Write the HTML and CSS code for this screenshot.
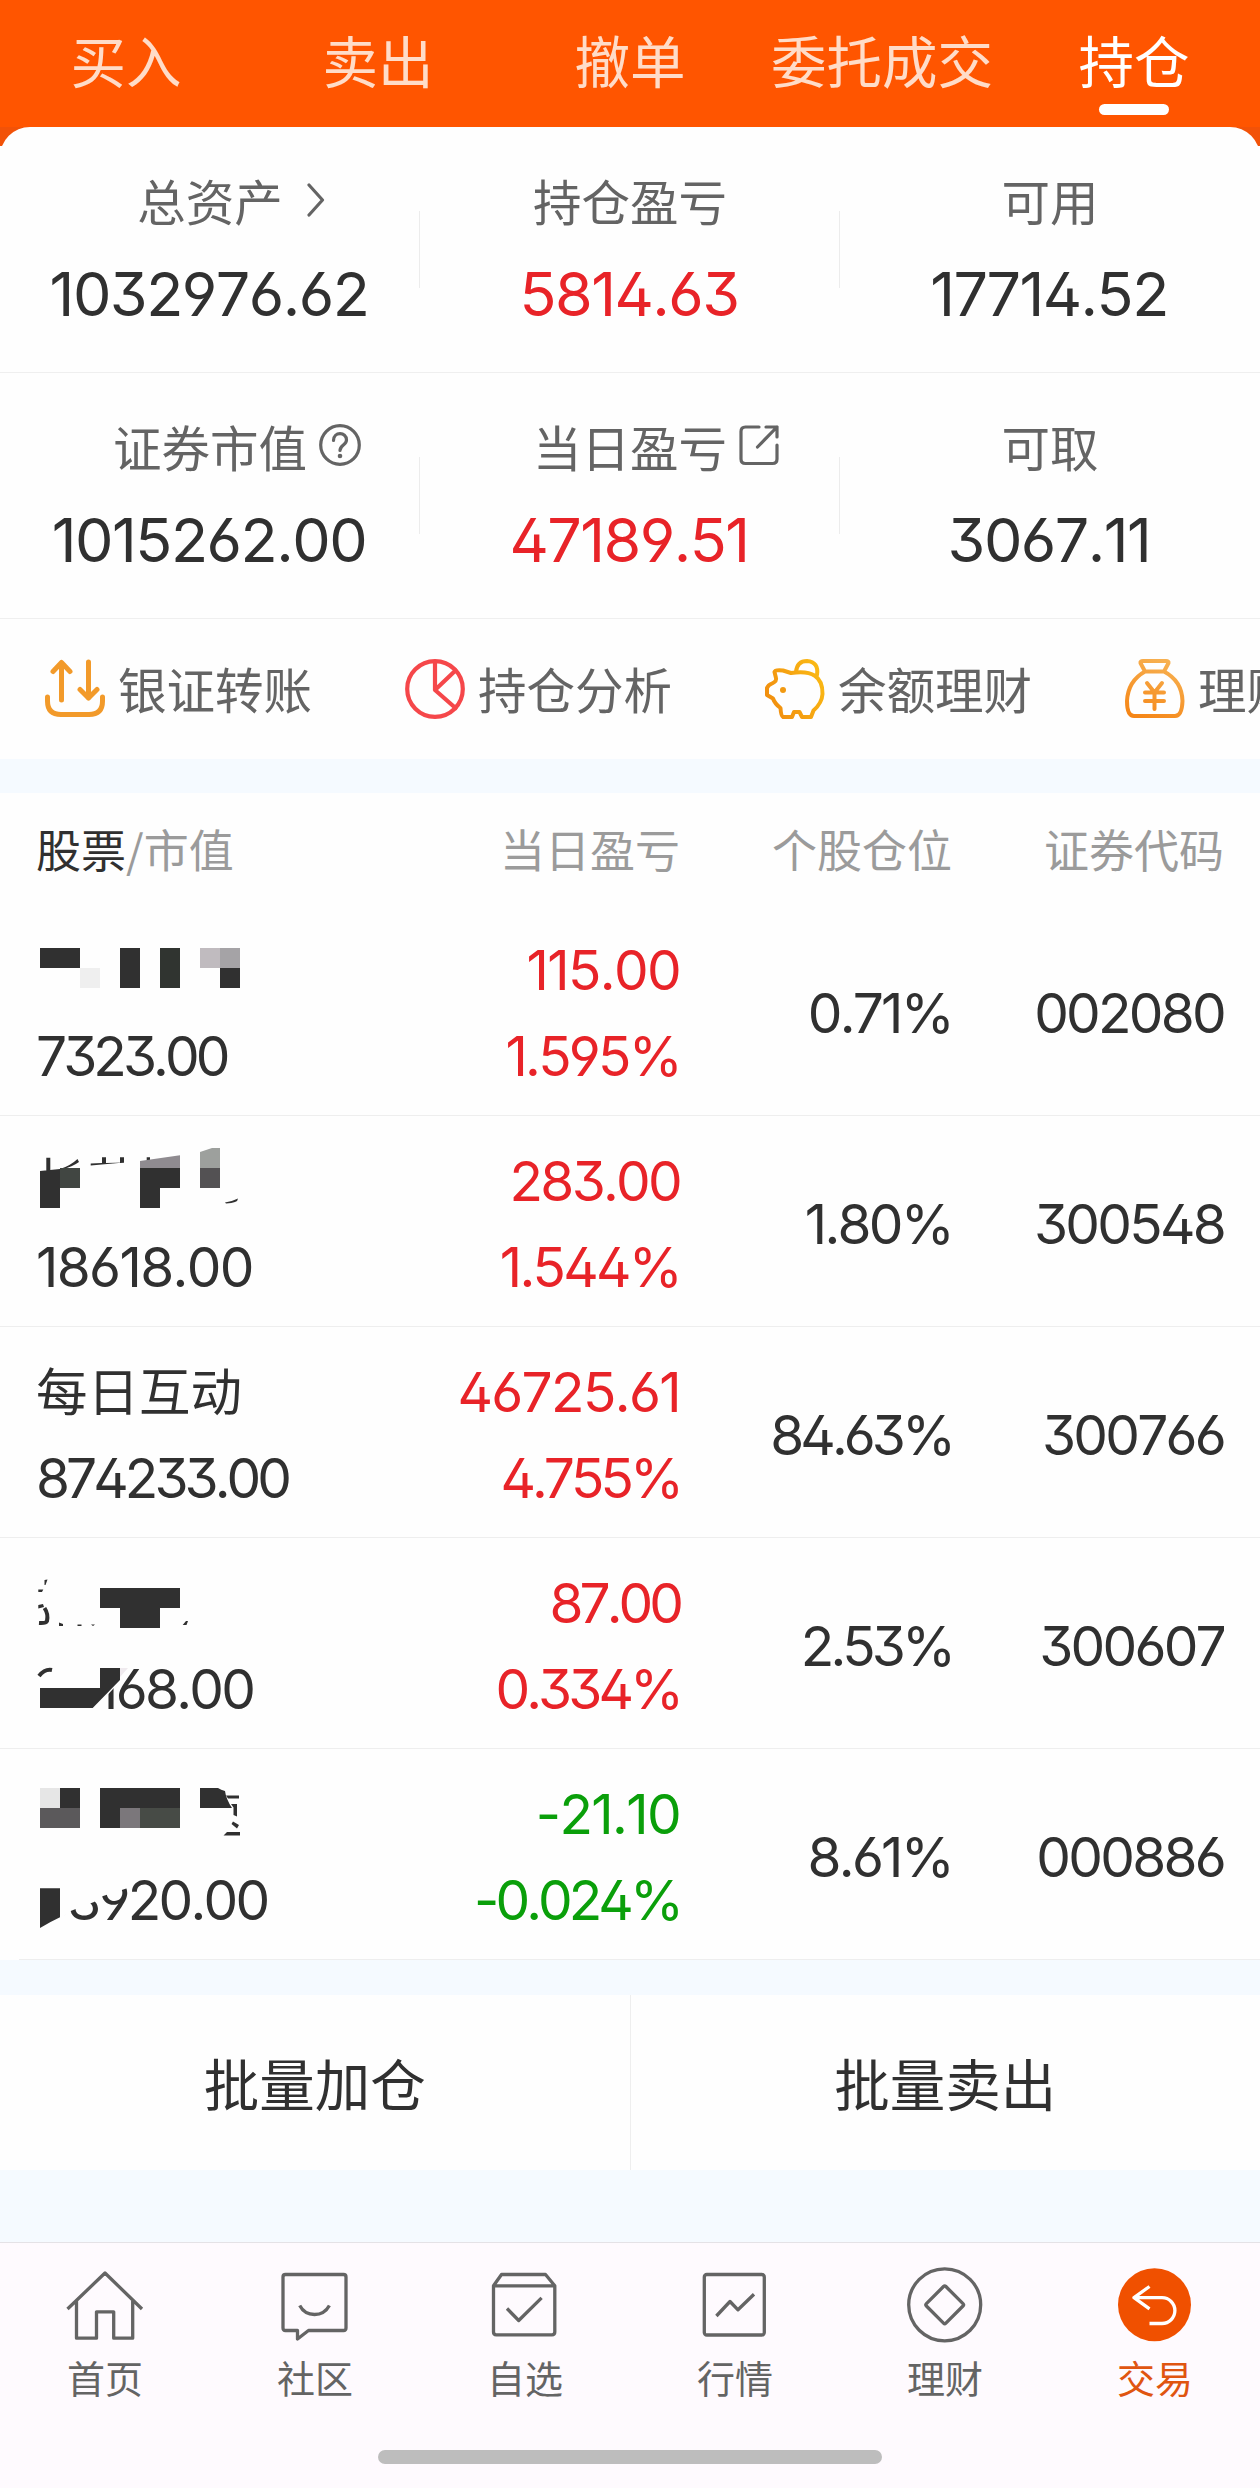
FILE: index.html
```html
<!DOCTYPE html>
<html lang="zh-CN">
<head>
    <meta charset="UTF-8">
    <title>持仓</title>
    <link rel="stylesheet" href="styles.css">
</head>
<body>
<div class="page">
    <div class="tabs">
        <a class="tab">买入</a>
        <a class="tab">卖出</a>
        <a class="tab">撤单</a>
        <a class="tab">委托成交</a>
        <a class="tab active">持仓</a>
    </div>

    <!-- 资产概览 -->
    <div class="summary-wrap">
        <div class="summary">
            <div class="summary-row">
                <div class="summary-item">
                    <div class="label">总资产<svg class="icon-arrow" viewBox="0 0 18 34"><path d="M2 2L15.500 17L2 32"/></svg></div>
                    <div class="value">1032976.62</div>
                </div>
                <div class="summary-item">
                    <div class="label">持仓盈亏</div>
                    <div class="value red">5814.63</div>
                </div>
                <div class="summary-item">
                    <div class="label">可用</div>
                    <div class="value">17714.52</div>
                </div>
            </div>
            <div class="summary-row">
                <div class="summary-item">
                    <div class="label">证券市值<svg class="icon-label" viewBox="0 0 42 42"><circle cx="21" cy="21" r="19.300"/><path d="M14.500 16.500C14.500 7.500 27.500 7.500 27.500 16C27.500 21 21 21 21 26.500"/><circle class="dot" cx="21" cy="32" r="2.300"/></svg></div>
                    <div class="value">1015262.00</div>
                </div>
                <div class="summary-item">
                    <div class="label">当日盈亏<svg class="icon-label" viewBox="0 0 42 42"><path d="M20 3H6.500Q2 3 2 7.500V35Q2 39.500 6.500 39.500H33.500Q38 39.500 38 35V21M27 3H38V13M38 3L18.500 23"/></svg></div>
                    <div class="value red">47189.51</div>
                </div>
                <div class="summary-item">
                    <div class="label">可取</div>
                    <div class="value">3067.11</div>
                </div>
            </div>
        </div>
    </div>

    <!-- 快捷入口 -->
    <div class="quick">
        <div class="quick-item">
            <svg viewBox="0 0 60 60" stroke="#f29a2a" stroke-width="5"><path d="M16.500 41V4M8 12.500L16.500 3.500L25 12.500M43.500 3V39M35 30.500L43.500 39L52 30.500M2.500 38V42Q2.500 55.500 16 55.500H44Q57.500 55.500 57.500 42V38"/></svg>
            <span>银证转账</span>
        </div>
        <div class="quick-item">
            <svg viewBox="0 0 60 60" stroke="#f5474a" stroke-width="4.200"><circle cx="30" cy="30" r="27.800"/><path d="M30 3V31L50.500 11.500M30 31L50.500 49"/></svg>
            <span>持仓分析</span>
        </div>
        <div class="quick-item">
            <svg viewBox="0 0 60 60" stroke="url(#pig)" stroke-width="4">
                <defs><linearGradient id="pig" gradientUnits="userSpaceOnUse" x1="0" y1="50" x2="60" y2="20"><stop offset="0" stop-color="#f08a0e"/><stop offset="1" stop-color="#fab914"/></linearGradient></defs>
                <path d="M11 19L9.500 13Q10 10.500 18 11.500L26 14Q58 9 57.500 35Q57 44 48.500 51.500L46 58H37L34.500 53H29L27 58H18Q16 57 15.500 49Q10 45 8 39.500L2 36V29Q3 26 7 24.500Q12 22 11 19Z"/>
                <path d="M31 13Q32 2 42 2Q54 3 52 16"/>
                <circle cx="18" cy="31" r="3" fill="#f29a12" stroke="none"/>
            </svg>
            <span>余额理财</span>
        </div>
        <div class="quick-item">
            <svg viewBox="0 0 60 60" stroke="url(#bag)" stroke-width="4">
                <defs><linearGradient id="bag" gradientUnits="userSpaceOnUse" x1="10" y1="60" x2="35" y2="0"><stop offset="0" stop-color="#f58414"/><stop offset="1" stop-color="#f7b050"/></linearGradient></defs>
                <path d="M20 12.500L15.500 4Q15 2 18 2H41Q44 2 43.500 4L39 12.500M20 12.500H39Q57 22 57.500 42Q57 57 50 57H9Q2 57 2 42Q3 22 20 12.500"/>
                <path d="M22 24L29.500 33.500L37 24M20 33.500H39M20 42H39M29.500 33.500V50"/>
            </svg>
            <span>理财</span>
        </div>
    </div>

    <!-- 持仓列表 -->
    <div class="table">
        <div class="row head">
            <div class="col-name"><b>股票</b>/市值</div>
            <div class="col">当日盈亏</div>
            <div class="col">个股仓位</div>
            <div class="col">证券代码</div>
        </div>

        <div class="row">
            <div class="col-name">
                <svg class="mosaic" viewBox="0 0 210 86">
                    <path d="M4 21H44V41H4zM84 21H104V61H84zM184 41H204V61H184z"/>
                    <path class="c-green" d="M124 21H144V61H124z"/>
                    <path fill="#efefef" d="M44 41H64V61H44z"/>
                    <path fill="#c0bbbf" d="M164 21H184V41H164z"/>
                    <path fill="#a5a3a6" d="M184 21H204V41H184z"/>
                </svg>
                <div class="num tight">7323.00</div>
            </div>
            <div class="col red"><div class="num loose">115.00</div><div class="num">1.595%</div></div>
            <div class="col num">0.71%</div>
            <div class="col num">002080</div>
        </div>

        <div class="row">
            <div class="col-name">
                <svg class="mosaic" viewBox="0 0 210 86">
                    <path d="M4 33L24 31V70H4zM10.300 19.700H14.300V33H10.300zM24 31Q34 28 41.500 21L43 24Q36 29 27 31zM54.700 25.500L66 25V19.300H70V25L88 24.500L54.700 27.500zM84 19.300H88V24.700H84zM110.700 19.300H114V24H110.700z"/>
                    <path d="M104 30H144V50H124V70H104zM189 64.500Q196 63.500 202 60.500Q202 65 190 65.500z"/>
                    <path fill="#414642" d="M24 30H44V50H24z"/>
                    <path fill="#8f8b90" d="M104 23L144 17.300V30H104z"/>
                    <path fill="#9da09d" d="M164 14L176 10H184V30H164z"/>
                    <path fill="#535153" d="M164 30H184V50H164z"/>
                </svg>
                <div class="num loose">18618.00</div>
            </div>
            <div class="col red"><div class="num">283.00</div><div class="num">1.544%</div></div>
            <div class="col num">1.80%</div>
            <div class="col num">300548</div>
        </div>

        <div class="row">
            <div class="col-name">
                <div class="name">每日互动</div>
                <div class="num tight">874233.00</div>
            </div>
            <div class="col red"><div class="num loose">46725.61</div><div class="num tight">4.755%</div></div>
            <div class="col num tight">84.63%</div>
            <div class="col num">300766</div>
        </div>

        <div class="row">
            <div class="col-name">
                <svg class="mosaic" viewBox="0 0 210 86">
                    <path d="M8.500 20L11.500 19.500L9.500 25H8.500zM2.300 29.500H7.300L6 32H2.300zM2.300 45L7 44L8 47L2.300 48.500zM23 62.500L27 64V66H23zM41.500 64.500H45.500V66H41.500zM55 64.500H59L57 66zM146.700 65L150 61H152L150.500 65z"/>
                    <path class="line" d="M8.500 48Q12.500 54 11 61Q10 63.500 3 63"/>
                    <path d="M64 28H144V48H124V68H84V48H64z"/>
                </svg>
                <div class="num masked">26168.00
                    <svg class="mosaic mask" viewBox="0 0 210 86">
                        <path class="cover" d="M-6 20H98L56 66H-6z"/>
                        <path class="line" d="M3 30Q9 22.500 16 24"/>
                        <path fill="#efeaee" d="M84 22H92L84 31z"/>
                        <path d="M4 42H64V22H84V34L56.700 62H4z"/>
                    </svg>
                </div>
            </div>
            <div class="col red"><div class="num tight">87.00</div><div class="num tight">0.334%</div></div>
            <div class="col num tight">2.53%</div>
            <div class="col num">300607</div>
        </div>

        <div class="row last">
            <div class="col-name">
                <svg class="mosaic" viewBox="0 0 210 86">
                    <path fill="#e6e6e6" d="M4 17H24V37H4z"/>
                    <path fill="#5b595b" d="M4 37H44V57H4z"/>
                    <path d="M24 17H44V37H24zM64 17H144V37H84V57H64zM164 17H182Q185 19 189 20Q190 28 196 37H164z"/>
                    <path fill="#7b777b" d="M84 37H104V57H84z"/>
                    <path fill="#474b46" d="M104 37H144V57H104z"/>
                    <path d="M190 24.500H203V27.500H192zM195 33H201V45.500L197.500 44V36.500zM197 50.500L203 54L201 57.500L195.500 53zM191 61H204V64.500H187.500z"/>
                </svg>
                <div class="num masked">88920.00
                    <svg class="mosaic mask" viewBox="0 0 210 86">
                        <path class="cover" d="M-6 19H107L95 30L64 40L58 45L32 55L24 65L-6 73z"/>
                        <path d="M4 31.300H24V60.300Q14 65 4 71z"/>
                    </svg>
                </div>
            </div>
            <div class="col green"><div class="num loose">-21.10</div><div class="num tight">-0.024%</div></div>
            <div class="col num">8.61%</div>
            <div class="col num">000886</div>
        </div>
    </div>

    <div class="actions">
        <a class="action">批量加仓</a>
        <a class="action">批量卖出</a>
    </div>

    <!-- 底部导航 -->
    <div class="nav">
        <div class="nav-list">
            <a class="nav-item">
                <svg viewBox="0 0 84 84"><path d="M4.500 46L42 10L79 46M13.500 38V75.200H33.500V48.800H50.700V75.200H69.700V38"/></svg>
                <span>首页</span>
            </a>
            <a class="nav-item">
                <svg viewBox="0 0 84 84"><path d="M12.500 11.500H70.500Q73 11.500 73 14V65Q73 67.500 70.500 67.500H35.500L24.500 76V67.500H12.500Q10 67.500 10 65V14Q10 11.500 12.500 11.500z"/><path d="M26.700 42.500Q31.500 51.500 41.500 51.500Q51.500 51.500 56.400 42.500"/></svg>
                <span>社区</span>
            </a>
            <a class="nav-item">
                <svg viewBox="0 0 84 84"><path d="M10.500 22.800L18.500 11.500H62.500L71.800 22.800V69Q71.800 71.800 69 71.800H13.300Q10.500 71.800 10.500 69zM10.500 22.800H71.800M24 45.500L35.700 57.500L58.600 34.800"/></svg>
                <span>自选</span>
            </a>
            <a class="nav-item">
                <svg viewBox="0 0 84 84"><rect x="11.300" y="11.500" width="60" height="60.500" rx="2.500"/><path d="M23.400 53L37 38.500L45 46.800L61 31.200"/></svg>
                <span>行情</span>
            </a>
            <a class="nav-item">
                <svg viewBox="0 0 84 84"><circle cx="41.700" cy="41.800" r="36"/><path d="M40.500 23.500Q41.700 22.300 42.900 23.500L60 40.600Q61.200 41.800 60 43L42.900 60.100Q41.700 61.300 40.500 60.100L23.400 43Q22.200 41.800 23.400 40.600z"/></svg>
                <span>理财</span>
            </a>
            <a class="nav-item active">
                <svg viewBox="0 0 84 84"><circle cx="41.500" cy="41.800" r="36.500"/><path d="M36.500 23.500L21 34.700L36.500 45.800M21 34.700H49A12.900 12.900 0 0 1 49 60.500H36.500"/></svg>
                <span>交易</span>
            </a>
        </div>
        <div class="home-bar"></div>
    </div>
</div>
</body>
</html>
```

FILE: styles.css
```css
body {
    margin: 0;
    background: #f5faff;
    color: #303030;
    font-family: "Noto Sans CJK SC", sans-serif;
}

.page {
    width: 1260px;
    height: 2488px;
    overflow: hidden;
    display: flex;
    flex-direction: column;
}

svg {
    display: block;
    flex: none;
    fill: none;
    stroke-linecap: round;
    stroke-linejoin: round;
}

.red {
    color: #e82328;
}
.green {
    color: #0a9f0a;
}

/* 顶部标签 */
.tabs {
    display: flex;
    height: 127px;
    background: #ff5500;
}
.tab {
    flex: 1;
    display: flex;
    flex-direction: column;
    align-items: center;
    font-size: 55.5px;
    line-height: 80px;
    padding-top: 19px;
    color: #ffdcc8;
}
.tab.active {
    color: #fff;
}
.tab.active::after {
    content: "";
    width: 70px;
    height: 11px;
    margin-top: 5px;
    border-radius: 6px;
    background: #fff;
}

/* 资产概览 */
.summary-wrap {
    background: linear-gradient(#f25208 19px, #fefefe 19px);
}
.summary {
    background: #fefefe;
    border-radius: 30px 30px 0 0;
}
.summary-row {
    display: flex;
    height: 245px;
    border-bottom: 1px solid #efefef;
}
.summary-item {
    flex: 1;
    display: flex;
    flex-direction: column;
    align-items: center;
    padding-top: 38px;
    background: linear-gradient(#ececec, #ececec) no-repeat right 84px / 1px 77px;
}
.summary-item:last-child {
    background: none;
}
.label {
    display: flex;
    align-items: center;
    font-size: 48.5px;
    line-height: 70px;
    color: #646464;
}
.label svg {
    stroke: #646464;
    stroke-width: 3.2;
}
.icon-arrow {
    width: 18px;
    height: 34px;
    margin: 0 -42px 0 24px;
}
.icon-label {
    width: 42px;
    height: 42px;
    margin: 0 -54px 2px 12px;
}
.icon-label .dot {
    fill: #646464;
    stroke: none;
}
.value,
.num {
    font-family: Inter, "Noto Sans CJK SC", sans-serif;
    font-feature-settings: "ss01";
    font-kerning: none;
}
.value {
    font-size: 61px;
    line-height: 80px;
    letter-spacing: -0.025em;
    margin: 19px 2px 0 0;
}

/* 快捷入口 */
.quick {
    display: flex;
    height: 140px;
    overflow: hidden;
    background: #fefefe;
    border-bottom: 34px solid #f5faff;
}
.quick-item {
    flex: none;
    display: flex;
    align-items: center;
    gap: 13px;
    width: 315px;
    padding-left: 45px;
    font-size: 48.5px;
    color: #646464;
    white-space: nowrap;
}
.quick-item svg {
    width: 60px;
    height: 60px;
}
.quick-item span {
    padding-bottom: 2px;
}

/* 持仓列表 */
.table {
    background: #fefefe;
    font-size: 55px;
}
.row {
    display: grid;
    grid-template-columns: 300px 344px 272px 272px;
    align-items: center;
    height: 205px;
    padding: 5px 36px 0;
    border-bottom: 1px solid #eee;
}
.row.head {
    height: 110px;
    padding: 0 36px 2px;
    border-bottom: none;
    font-size: 45px;
    color: #9b9b9b;
}
.row.last {
    border-image: linear-gradient(90deg, #fefefe 20px, #eee 20px) 1;
}
.head b {
    font-weight: 400;
    color: #303030;
}
.col {
    text-align: right;
}
.num {
    line-height: 86px;
    letter-spacing: -0.05em;
}
.num.tight {
    letter-spacing: -0.072em;
}
.num.loose {
    letter-spacing: -0.03em;
}
.name {
    font-size: 51.5px;
    line-height: 80px;
    padding-bottom: 6px;
}
.mosaic {
    width: 210px;
    height: 86px;
    fill: #303030;
}
.mosaic .c-green {
    fill: #303430;
}
.mosaic .line {
    fill: none;
    stroke: #303030;
    stroke-width: 4;
    stroke-linecap: butt;
}
.mosaic .cover {
    fill: #fefefe;
}
.masked {
    position: relative;
}
.mask {
    position: absolute;
    left: 0;
    top: 0;
    overflow: visible;
}

/* 批量操作 */
.actions {
    display: flex;
    height: 175px;
    border-top: 35px solid #f5faff;
    background: #fefefe;
}
.action {
    flex: 1;
    text-align: center;
    font-size: 55.5px;
    line-height: 175px;
}
.action:first-child {
    box-sizing: border-box;
    border-right: 1px solid #eee;
}

/* 底部导航 */
.nav {
    margin-top: auto;
    height: 245px;
    border-top: 1px solid #e4e2e6;
    background: #fefafe;
}
.nav-list {
    display: flex;
    padding-top: 20px;
}
.nav-item {
    flex: 1;
    display: flex;
    flex-direction: column;
    align-items: center;
    font-size: 38px;
    line-height: 56px;
    color: #646464;
}
.nav-item svg {
    width: 84px;
    height: 84px;
    margin-bottom: 2px;
    stroke: #646464;
    stroke-width: 3.3;
    stroke-linecap: butt;
}
.nav-item.active {
    color: #e05510;
}
.nav-item.active svg {
    stroke: #fff;
}
.nav-item.active circle {
    fill: #f05000;
    stroke: none;
}
.home-bar {
    width: 504px;
    height: 14px;
    margin: 45px auto 0;
    border-radius: 7px;
    background: #bdbdbd;
}
```
